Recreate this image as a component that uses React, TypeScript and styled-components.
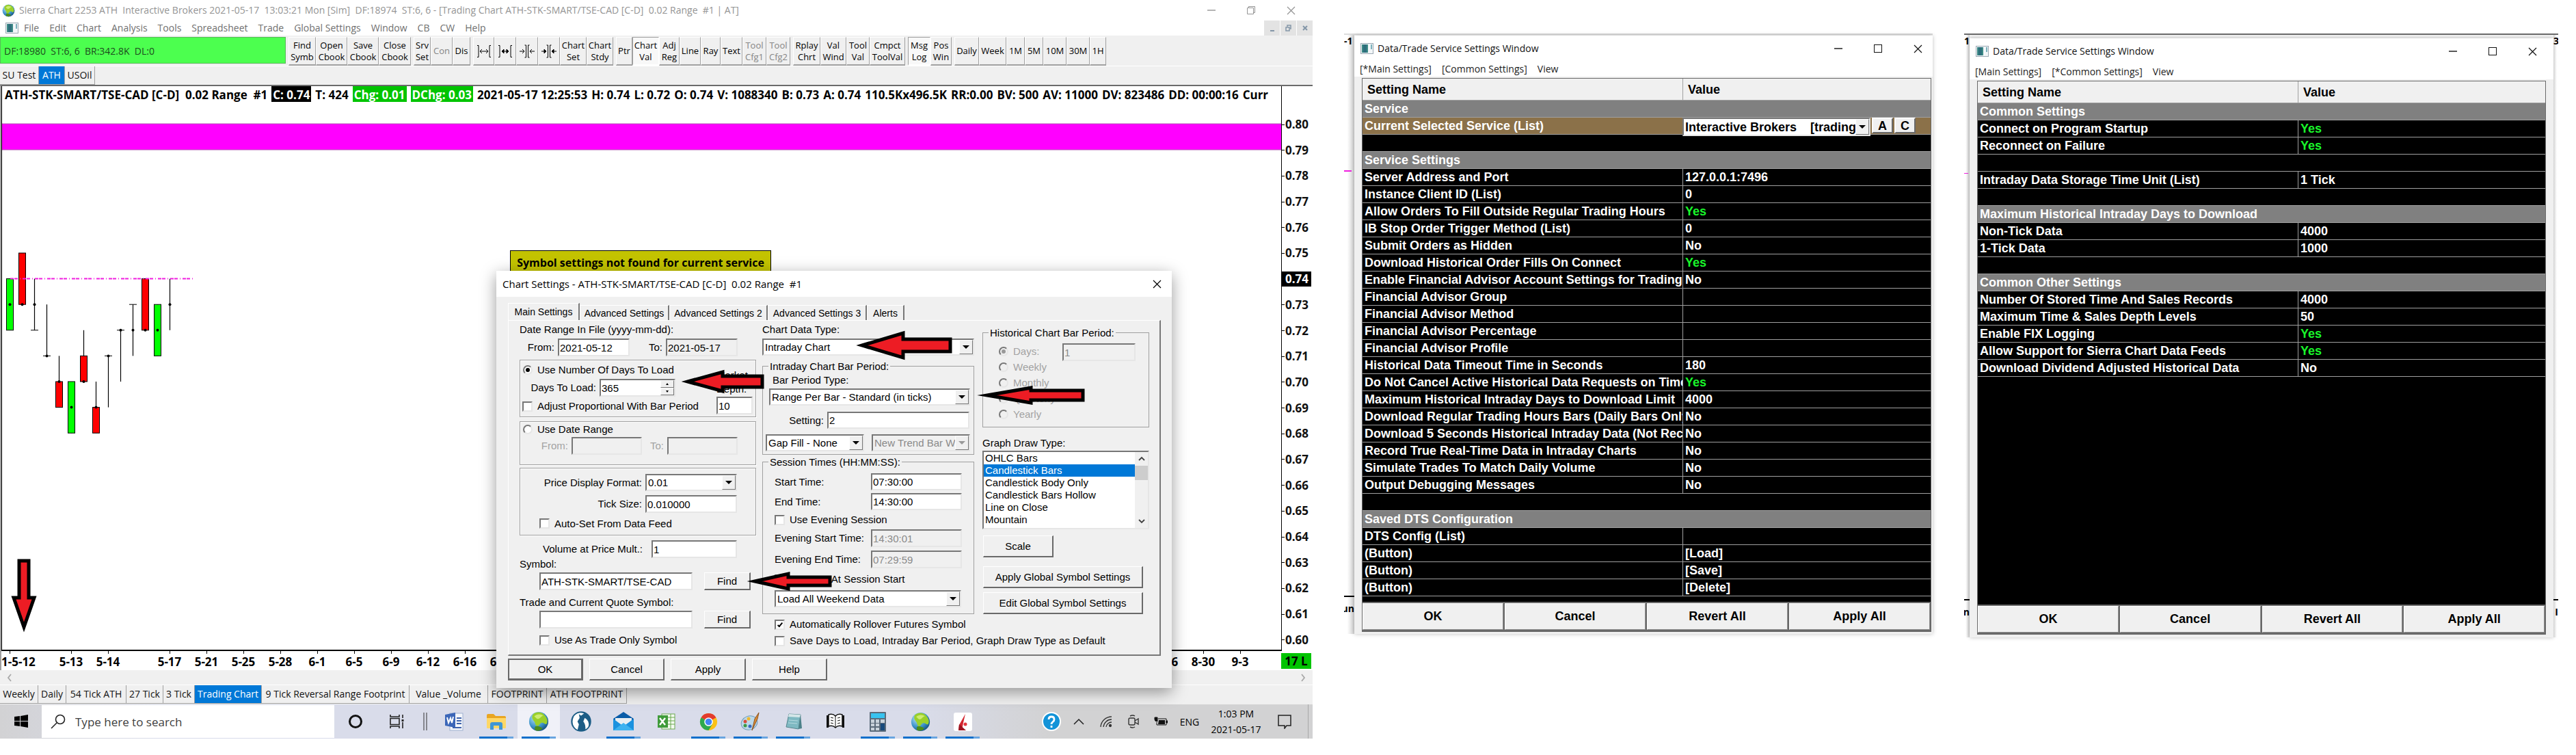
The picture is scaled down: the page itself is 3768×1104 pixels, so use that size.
import React from 'react';
import styled, { createGlobalStyle, css } from 'styled-components';

const UI = `"Open Sans", "Noto Sans", sans-serif`;
const SANS = `"Liberation Sans", Arial, sans-serif`;

const Global = createGlobalStyle`
  *, *::before, *::after { box-sizing: border-box; }
  body { margin: 0; background: #fff; color: #000; font-family: ${UI}; font-size: 14px; }
  button, input, select { font: inherit; color: inherit; margin: 0; border-radius: 0; }
  svg { display: block; flex: none; }
`;

const Page = styled.main`
  display: grid;
  grid-template-columns: 1920fr 861fr 869fr;
  column-gap: 46px;
  padding-right: 26px;
  align-items: start;
`;

/* ---------- application window ---------- */

const AppWindow = styled.section`
  position: relative;
  display: flex;
  flex-direction: column;
  min-width: 0;
  background: #fff;
`;

const TitleBar = styled.header<{ $h: number; $end?: number; $muted?: boolean }>`
  display: flex;
  align-items: center;
  gap: 6px;
  height: ${p => p.$h}px;
  padding: 0 ${p => p.$end ?? 0}px 0 ${p => (p.$muted ? 3 : 9)}px;
  background: #fff;
  color: ${p => (p.$muted ? '#949494' : '#111')};
`;

const TitleText = styled.h1`
  flex: 1;
  margin: 0;
  font-size: 14px;
  font-weight: 400;
  line-height: 20px;
  white-space: pre;
`;

const Controls = styled.div`
  display: flex;
  gap: 14px;
`;

const GlyphButton = styled.button`
  display: grid;
  place-items: center;
  width: 44px;
  height: 24px;
  padding: 0;
  border: 0;
  background: none;
`;

const MenuBar = styled.nav<{ $h: number; $muted?: boolean }>`
  display: flex;
  align-items: center;
  gap: 15px;
  height: ${p => p.$h}px;
  padding-left: 8px;
  background: #fff;
  color: ${p => (p.$muted ? '#6f6f6f' : '#1c1c1c')};
  > svg { margin-right: -7px; }
`;

const MenuItem = styled.a`
  color: inherit;
  font-size: 14px;
  line-height: 20px;
  text-decoration: none;
  white-space: nowrap;
`;

const MdiControls = styled.div`
  display: flex;
  gap: 1px;
  height: 22px;
  margin-left: auto;
`;

const MdiButton = styled.button`
  display: grid;
  place-items: center;
  width: 23px;
  padding: 0;
  border: 0;
  background: #e3e3e3;
  color: #8496a8;
`;

const ToolBar = styled.div`
  display: flex;
  gap: 4px;
  height: 44px;
  padding-top: 2px;
  background: #f0f0f0;
`;

const Status = styled.div`
  width: 418px;
  height: 39px;
  padding-left: 5px;
  border: 1px solid #58b958;
  background: #4cff4f;
  color: #1d4a1d;
  font-size: 14px;
  line-height: 40px;
  white-space: pre;
`;

const ToolGroup = styled.div`
  display: flex;
`;

const Tool = styled.button<{ $w: number; $on?: boolean }>`
  display: grid;
  place-content: center;
  width: ${p => p.$w}px;
  padding: 0;
  border: solid;
  border-width: 1px 1px 2px;
  border-color: ${p => (p.$on ? '#a0a0a0 #fff #fff #a0a0a0' : '#fff #a0a0a0 #a0a0a0 #fff')};
  background: ${p => (p.$on ? '#f8f8f8' : '#f0f0f0')};
  font-size: 13px;
  line-height: 17px;
  text-align: center;
  white-space: pre;
  &:disabled { color: #858585; }
`;

const TabStrip = styled.div<{ $h: number }>`
  display: flex;
  height: ${p => p.$h}px;
  border-top: 1px solid #fff;
  background: #f0f0f0;
`;

const SheetTab = styled.button<{ $w: number; $on?: boolean }>`
  width: ${p => p.$w}px;
  height: 27px;
  padding: 0;
  border: solid;
  border-width: 0 1px 1px 0;
  border-color: #a0a0a0;
  background: ${p => (p.$on ? '#0078d7' : '#f0f0f0')};
  color: ${p => (p.$on ? '#fff' : '#111')};
  font-size: 14px;
  line-height: 24px;
  white-space: nowrap;
`;

const Chart = styled.div`
  display: grid;
  grid-template-columns: minmax(0, 1fr) 46px;
  border-top: 2px solid #6b6b6b;
  border-left: 2px solid #a0a0a0;
  font-weight: 700;
`;

const Plot = styled.div`
  display: flex;
  flex-direction: column;
  min-width: 0;
  border-left: 1px solid #000;
  border-bottom: 2px solid #000;
`;

const Readout = styled.div`
  display: flex;
  gap: 6px;
  height: 24px;
  padding-left: 4px;
  overflow: hidden;
  font-size: 17px;
  line-height: 25px;
  white-space: pre;
`;

const Chip = styled.span<{ $bg: string }>`
  height: 23px;
  padding: 0 2px;
  background: ${p => p.$bg};
  color: #fff;
`;

const PriceAxis = styled.ol`
  display: flex;
  flex-direction: column;
  justify-content: space-between;
  margin: 0;
  padding: 45px 2px 5px 0;
  border-left: 1px solid #000;
  list-style: none;
`;

const Price = styled.li<{ $on?: boolean }>`
  display: flex;
  align-items: center;
  height: 22px;
  background: ${p => (p.$on ? '#000' : 'none')};
  color: ${p => (p.$on ? '#fff' : '#111')};
  font-size: 17px;
  line-height: 22px;
  &::before { content: ''; width: 4px; height: 1px; margin-right: 1px; background: #000; }
`;

const DateAxis = styled.ol`
  display: flex;
  min-width: 0;
  height: 28px;
  margin: 0;
  padding: 0;
  overflow: hidden;
  list-style: none;
  font-size: 17px;
  line-height: 24px;
`;

const DateCell = styled.li<{ $w: number; $first?: boolean }>`
  display: flex;
  flex: none;
  flex-direction: column;
  align-items: ${p => (p.$first ? 'flex-start' : 'center')};
  width: ${p => p.$w}px;
  white-space: nowrap;
  &::before {
    content: '';
    width: 1px;
    height: 4px;
    margin-left: ${p => (p.$first ? '12px' : 0)};
    background: #000;
  }
`;

const DateGap = styled.li<{ $w: number }>`
  flex: none;
  width: ${p => p.$w}px;
`;

const LastMark = styled.div`
  align-self: center;
  height: 23px;
  margin-right: 2px;
  background: #00c400;
  font-size: 17px;
  line-height: 23px;
  text-align: center;
`;

const ScrollTrack = styled.div`
  display: flex;
  align-items: center;
  justify-content: space-between;
  height: 21px;
  padding: 0 8px;
  background: #f0f0f0;
`;

/* ---------- taskbar ---------- */

const TaskBar = styled.footer`
  display: flex;
  height: 50px;
  background: linear-gradient(90deg, #d2d2d4 0, #d9dcea 12%, #d9dcea 70%, #d2d2d3 80%);
`;

const TaskSlot = styled.button<{ $w: number; $live?: boolean; $on?: boolean }>`
  position: relative;
  display: grid;
  place-items: center;
  width: ${p => p.$w}px;
  padding: 0;
  border: 0;
  background: ${p => (p.$on ? '#f0f1f8' : 'none')};
  ${p => p.$live && css`
    &::after {
      content: '';
      position: absolute;
      right: 6px;
      bottom: 0;
      left: 6px;
      height: 3px;
      background: linear-gradient(90deg, #0b6fcb 82%, #69a5e0 82%);
    }
  `}
`;

const Search = styled.label`
  display: flex;
  align-items: center;
  gap: 14px;
  width: 428px;
  margin: 1px 0;
  padding-left: 13px;
  background: #fff;
`;

const SearchInput = styled.input`
  flex: 1;
  min-width: 0;
  padding: 0;
  border: 0;
  outline: 0;
  background: none;
  font-size: 17px;
  &::placeholder { color: #404040; opacity: 1; }
`;

const Tray = styled.div`
  display: flex;
  margin-left: auto;
  padding-right: 6px;
`;

const TrayText = styled.div<{ $w: number }>`
  align-self: center;
  width: ${p => p.$w}px;
  font-size: 14px;
  line-height: 23px;
  text-align: center;
`;

const ShowDesktop = styled.div`
  width: 10px;
  border-right: 1px solid #a8a8a8;
`;

/* ---------- chart settings dialog ---------- */

const Notice = styled.div`
  position: absolute;
  top: 366px;
  left: 746px;
  width: 382px;
  height: 40px;
  border: 1px solid #000;
  background: #c3c300;
  font-size: 16px;
  font-weight: 700;
  line-height: 34px;
  text-align: center;
  white-space: nowrap;
`;

const Dialog = styled.form`
  position: absolute;
  top: 396px;
  left: 726px;
  display: flex;
  flex-direction: column;
  width: 988px;
  padding-bottom: 11px;
  background: #f0f0f0;
  box-shadow: 0 6px 22px rgba(0, 0, 0, 0.4);
  font-family: ${SANS};
  font-size: 15px;
  line-height: 18px;
`;

const DialogTitle = styled.div`
  display: flex;
  align-items: center;
  justify-content: space-between;
  height: 38px;
  padding-left: 9px;
  background: #fff;
  font-family: ${UI};
  font-size: 15px;
  white-space: pre;
`;

const DialogTabs = styled.div`
  display: flex;
  align-items: flex-end;
  height: 34px;
  padding-left: 17px;
`;

const DialogTab = styled.button<{ $w: number; $on?: boolean }>`
  width: ${p => p.$w}px;
  height: ${p => (p.$on ? 25 : 22)}px;
  padding: 0;
  border: solid;
  border-width: 1px 2px 0 1px;
  border-color: #fff #777 #fff #fff;
  background: #f0f0f0;
  font-size: 14px;
  white-space: nowrap;
`;

const Panel = styled.div`
  display: grid;
  grid-template-columns: 346px 310px 247px;
  margin: 0 16px 0 17px;
  height: 491px;
  padding-left: 16px;
  column-gap: 9px;
  border: solid;
  border-width: 1px 2px 2px 1px;
  border-color: #fff #777 #777 #fff;
`;

const Column = styled.div<{ $pl?: number }>`
  display: flex;
  flex-direction: column;
  min-width: 0;
  padding-left: ${p => p.$pl ?? 0}px;
`;

const Line = styled.div<{ $h: number; $cols?: string; $pl?: number; $mt?: number; $gap?: number }>`
  display: grid;
  grid-template-columns: ${p => p.$cols ?? 'auto'};
  column-gap: ${p => p.$gap ?? 0}px;
  align-items: center;
  flex: none;
  height: ${p => p.$h}px;
  margin-top: ${p => p.$mt ?? 0}px;
  padding-left: ${p => p.$pl ?? 0}px;
  white-space: nowrap;
`;

const Caption = styled.label<{ $end?: boolean; $dim?: boolean }>`
  padding-right: ${p => (p.$end ? 5 : 0)}px;
  color: ${p => (p.$dim ? '#a3a3a3' : 'inherit')};
  text-align: ${p => (p.$end ? 'right' : 'left')};
  white-space: nowrap;
`;

const sunken = css`
  border: 2px solid;
  border-color: #777 #e6e6e6 #e6e6e6 #777;
`;

const Field = styled.input`
  width: 100%;
  min-width: 0;
  height: 100%;
  padding: 0 1px;
  ${sunken}
  outline: 0;
  background: #fff;
  font-size: 15px;
  &:read-only, &:disabled { background: #f0f0f0; }
  &:disabled { color: #8a8a8a; }
`;

const Group = styled.div<{ $mt: number; $h: number; $cols?: string }>`
  display: grid;
  grid-template-columns: ${p => p.$cols ?? 'minmax(0, 1fr)'};
  align-content: start;
  flex: none;
  height: ${p => p.$h}px;
  margin-top: ${p => p.$mt}px;
  border: 1px solid #a0a0a0;
  box-shadow: 1px 1px 0 #fff, inset 1px 1px 0 #fff;
`;

const FieldSet = styled.fieldset<{ $mt: number; $h: number }>`
  flex: none;
  min-width: 0;
  height: ${p => p.$h}px;
  margin: ${p => p.$mt}px 0 0;
  padding: 0;
  border: 1px solid #a0a0a0;
`;

const Legend = styled.legend`
  height: 18px;
  margin-left: 8px;
  padding: 0 2px;
  line-height: 19px;
`;

const Tick = styled.label<{ $dim?: boolean }>`
  display: flex;
  align-items: center;
  gap: 7px;
  color: ${p => (p.$dim ? '#a3a3a3' : 'inherit')};
  white-space: nowrap;
`;

const CheckInput = styled.input`
  appearance: none;
  display: grid;
  place-content: center;
  width: 15px;
  height: 15px;
  ${sunken}
  background: #fff;
  &:checked::after {
    content: '';
    width: 4px;
    height: 8px;
    border: solid #000;
    border-width: 0 2px 2px 0;
    transform: rotate(40deg);
  }
`;

const RadioInput = styled.input`
  appearance: none;
  display: grid;
  place-content: center;
  width: 14px;
  height: 14px;
  ${sunken}
  border-radius: 50%;
  background: #fff;
  &:disabled { background: #f0f0f0; }
  &:checked::after { content: ''; width: 6px; height: 6px; border-radius: 50%; background: #000; }
  &:checked:disabled::after { background: #999; }
`;

const PickBox = styled.span`
  position: relative;
  display: block;
  height: 100%;
  min-width: 0;
`;

const Pick = styled.select<{ $bold?: boolean }>`
  appearance: none;
  width: 100%;
  height: 100%;
  padding: 0 20px 0 2px;
  ${sunken}
  outline: 0;
  background: #fff;
  font-size: ${p => (p.$bold ? 18 : 15)}px;
  font-weight: ${p => (p.$bold ? 700 : 400)};
  &:disabled { background: #f0f0f0; color: #8a8a8a; opacity: 1; }
`;

const PickArrow = styled.span<{ $dim?: boolean }>`
  position: absolute;
  top: 2px;
  right: 2px;
  bottom: 2px;
  display: grid;
  place-items: center;
  width: 20px;
  border: 1px solid;
  border-color: #fff #777 #777 #fff;
  background: #f0f0f0;
  pointer-events: none;
  &::after {
    content: '';
    border: solid transparent;
    border-width: 5px 5px 0;
    border-top-color: ${p => (p.$dim ? '#999' : '#000')};
  }
`;

const SpinBox = styled.div`
  display: grid;
  grid-template-columns: minmax(0, 1fr) 20px;
  height: 100%;
  ${sunken}
  background: #fff;
  input { border: 0; }
`;

const SpinButtons = styled.div`
  display: grid;
  grid-template-rows: 1fr 1fr;
`;

const SpinButton = styled.button`
  display: grid;
  place-items: center;
  padding: 0;
  border: 1px solid;
  border-color: #fff #777 #777 #fff;
  background: #f0f0f0;
`;

const Push = styled.button<{ $w?: number; $h?: number; $mt?: number; $main?: boolean }>`
  flex: none;
  width: ${p => (p.$w ? `${p.$w}px` : '100%')};
  height: ${p => (p.$h ? `${p.$h}px` : '100%')};
  margin: ${p => p.$mt ?? 0}px 0 0 1px;
  padding: 0;
  border: solid;
  border-width: ${p => (p.$main ? '2px 3px 3px 2px' : '1px 2px 2px 1px')};
  border-color: ${p => (p.$main ? '#696969' : '#fff #696969 #696969 #fff')};
  background: #f0f0f0;
  font-size: 15px;
  white-space: nowrap;
`;

const DepthCell = styled.div`
  padding: 12px 4px 0 0;
  line-height: 20px;
`;

const DepthField = styled.div`
  height: 26px;
  margin-top: 1px;
`;

const PeriodGrid = styled.div`
  display: grid;
  grid-template-columns: 93px 107px;
  padding: 7px 0 0 23px;
`;

const PeriodField = styled.div`
  height: 26px;
`;

const ListBox = styled.div`
  display: grid;
  grid-template-columns: minmax(0, 1fr) 19px;
  flex: none;
  height: 115px;
  ${sunken}
  background: #fff;
`;

const ListItems = styled.ul`
  margin: 0;
  padding: 0;
  overflow: hidden;
  list-style: none;
`;

const ListItem = styled.li<{ $on?: boolean }>`
  height: 18px;
  padding-left: 2px;
  background: ${p => (p.$on ? '#0078d7' : 'none')};
  color: ${p => (p.$on ? '#fff' : 'inherit')};
  white-space: nowrap;
`;

const ListScroll = styled.div`
  display: grid;
  grid-template-rows: 20px 21px 1fr 20px;
  justify-items: center;
  align-items: center;
  background: #f0f0f0;
`;

const ListThumb = styled.span`
  width: 100%;
  height: 100%;
  background: #cdcdcd;
`;

const DialogButtons = styled.div`
  display: flex;
  gap: 8px;
  height: 32px;
  margin-top: 4px;
  padding-left: 16px;
`;

const Annotations = styled.svg`
  position: absolute;
  inset: 0;
  width: 100%;
  height: 100%;
  pointer-events: none;
`;

/* ---------- service settings windows ---------- */

const Frame = styled.section<{ $cols: string; $edge: string }>`
  display: grid;
  grid-template-columns: ${p => p.$cols};
  min-width: 0;
  margin-top: 49px;
  border-top: 2px solid ${p => p.$edge};
  background: #f3f3f3;
`;

const Sliver = styled.div<{ $side: 'left' | 'right' }>`
  display: flex;
  flex-direction: column;
  min-width: 0;
  overflow: hidden;
  background: linear-gradient(${p => (p.$side === 'left' ? '90deg' : '270deg')}, #fff 30%, #d2d2d2);
  color: #000;
  font-size: 14px;
  font-weight: 700;
  line-height: 18px;
`;

const SliverMark = styled.span<{ $mt: number; $color: string; $h: number }>`
  width: 70%;
  height: ${p => p.$h}px;
  margin-top: ${p => p.$mt}px;
  background: ${p => p.$color};
`;

const SliverFoot = styled.div`
  margin-top: auto;
  height: 56px;
  padding-top: 8px;
  border-top: 2px solid #000;
  direction: rtl;
`;

const ServiceWindow = styled.div<{ $mt: number }>`
  display: flex;
  flex-direction: column;
  min-width: 0;
  margin-top: ${p => p.$mt}px;
  background: #f0f0f0;
  box-shadow: 0 0 6px rgba(0, 0, 0, 0.25);
`;

const ServiceBody = styled.div<{ $pad: string; $rest: number }>`
  padding: ${p => p.$pad};
  font-family: ${SANS};
  > div:first-child { padding-bottom: ${p => p.$rest}px; }
`;

const TableWrap = styled.div`
  border: 1px solid #696969;
  border-bottom: 0;
  background: #000;
`;

const SettingsTable = styled.table`
  width: 100%;
  border-collapse: separate;
  border-spacing: 0;
  table-layout: fixed;
  color: #fff;
  font-size: 18px;
  font-weight: 700;
  line-height: 20px;
`;

const HeadCell = styled.th`
  height: 32px;
  padding: 0 7px;
  border-bottom: 1px solid #a0a0a0;
  background: #f0f0f0;
  color: #000;
  text-align: left;
  &:first-child { width: 469px; border-right: 1px solid #a0a0a0; }
`;

const Cell = styled.td<{ $kind?: 'section' | 'active'; $split?: boolean; $yes?: boolean }>`
  height: 25px;
  padding: 0 0 0 3px;
  border-bottom: 1px solid #a0a0a0;
  border-right: ${p => (p.$split ? '1px solid #a0a0a0' : 0)};
  background: ${p => (p.$kind === 'section' ? '#808080' : p.$kind === 'active' ? '#8b7149' : '#000')};
  color: ${p => (p.$yes ? '#19f52a' : '#fff')};
  overflow: ${p => (p.$kind === 'active' && !p.$split ? 'visible' : 'hidden')};
  white-space: nowrap;
`;

const Picker = styled.div`
  display: flex;
  align-items: flex-start;
  gap: 2px;
  height: 24px;
  margin-left: -4px;
  color: #000;
`;

const PickerSelect = styled.div`
  width: 275px;
  height: 27px;
`;

const PickerButton = styled.button`
  width: 31px;
  height: 23px;
  padding: 0;
  border: 2px solid;
  border-color: #fff #696969 #696969 #fff;
  background: #f0f0f0;
  font-size: 18px;
  font-weight: 700;
  line-height: 18px;
`;

const ActionRow = styled.div`
  display: grid;
  grid-template-columns: repeat(4, 1fr);
  gap: 2px;
  padding: 2px 2px 3px 1px;
  background: #696969;
`;

const ActionButton = styled.button`
  height: 39px;
  padding: 0;
  border: 1px solid;
  border-color: #fff #8c8c8c #8c8c8c #fff;
  background: #f0f0f0;
  font-size: 18px;
  font-weight: 700;
`;

/* ---------- icons ---------- */

const Globe = ({ size = 24 }: { size?: number }) => (
  <svg width={size} height={size} viewBox="0 0 32 32" aria-hidden="true">
    <defs>
      <radialGradient id={`sea${size}`} cx="0.35" cy="0.3" r="0.8">
        <stop offset="0" stopColor="#bfe6f7" />
        <stop offset="0.6" stopColor="#3c93c9" />
        <stop offset="1" stopColor="#0e4673" />
      </radialGradient>
    </defs>
    <circle cx="16" cy="16" r="15" fill={`url(#sea${size})`} />
    <path d="M7 5c5-5 14-4 18 1 4 4 6 10 3 14-3 1-4-3-8-2-3 1-3 5-6 5-4 0-3-5-5-7-2-3-5-6-2-11z" fill="#9bd02a" />
    <path d="M10 24c4-2 9 0 12 3-4 4-9 4-12 2z" fill="#4c8e1a" />
    <path d="M9 8c4-4 10-4 14-1-4 1-5 5-8 5s-4-3-6-4z" fill="#cdec72" />
  </svg>
);

const AppGlyph = () => (
  <svg width="19" height="16" viewBox="0 0 19 16" aria-hidden="true">
    <rect x="0.5" y="0.5" width="18" height="15" fill="#f2f6f8" stroke="#9aa8b2" />
    <rect x="2" y="2" width="9" height="12" fill="#3d8a86" />
    <rect x="4" y="2" width="5" height="12" fill="#2e6f7c" />
    <rect x="15" y="2" width="2" height="7" fill="#7ab0bb" />
  </svg>
);

const MinimizeGlyph = () => (
  <svg width="12" height="12" aria-hidden="true"><path d="M0 6h12" stroke="currentColor" strokeWidth="1.4" /></svg>
);
const MaximizeGlyph = () => (
  <svg width="12" height="12" aria-hidden="true"><rect x="0.5" y="0.5" width="11" height="11" fill="none" stroke="currentColor" /></svg>
);
const RestoreGlyph = () => (
  <svg width="12" height="12" aria-hidden="true"><path d="M0.5 2.5h9v9h-9zM2.5 2V0.5h9v9H10" fill="none" stroke="currentColor" /></svg>
);
const CloseGlyph = () => (
  <svg width="13" height="13" aria-hidden="true"><path d="M1 1l11 11M12 1L1 12" stroke="currentColor" strokeWidth="1.2" /></svg>
);
const Chevron = ({ d, color = '#404040' }: { d: string; color?: string }) => (
  <svg width="12" height="12" aria-hidden="true"><path d={d} fill="none" stroke={color} strokeWidth="1.8" /></svg>
);

const SpacingGlyph = ({ inward, solid }: { inward?: boolean; solid?: boolean }) => (
  <svg width="22" height="20" viewBox="0 0 22 20" aria-hidden="true" stroke="#000">
    {inward ? (
      <>
        <path d="M9.5 1v18M12.5 1v18M7.500 1h2M7.500 19h2M12.500 1h2M12.500 19h2M0 10h7M15 10h7" fill="none" />
        <path d={solid ? 'M4 7l3 3-3 3zM18 7l-3 3 3 3z' : 'M4 7l3 3-3 3M18 7l-3 3 3 3'} fill={solid ? '#000' : 'none'} />
      </>
    ) : (
      <>
        <path d="M1 1.500h2v17H1M21 1.500h-2v17h2M6 10h10" fill="none" />
        <path d={solid ? 'M9 7l-3 3 3 3zM13 7l3 3-3 3z' : 'M8 7l-3 3 3 3M14 7l3 3-3 3'} fill={solid ? '#000' : 'none'} />
      </>
    )}
  </svg>
);

const taskIcons: Record<string, React.ReactNode> = {
  start: <svg width="22" height="22" viewBox="0 0 22 22"><path d="M1 4l8-1v7H1zM10 3l11-2v9H10zM1 11h8v7l-8-1zM10 11h11v9l-11-2z" fill="#000" /></svg>,
  cortana: <svg width="22" height="22" viewBox="0 0 22 22"><circle cx="11" cy="11" r="8.500" fill="none" stroke="#111" strokeWidth="3" /></svg>,
  view: <svg width="22" height="22" viewBox="0 0 22 22" fill="none" stroke="#222" strokeWidth="1.600"><path d="M1 1v3h13V1M1 21v-3h13v3M1 6.500h13v9H1zM19 1v5M19 12v9" /><path d="M19 8v3" strokeWidth="3" /></svg>,
  bars: <svg width="6" height="26"><path d="M1 0v26M5 0v26" stroke="#333" /></svg>,
  word: <svg width="28" height="28" viewBox="0 0 28 28"><rect x="8" y="2" width="19" height="25" fill="#f4f6fb" stroke="#9fb0cf" /><path d="M18 9h7M18 13h7M18 17h7M12 23h13" stroke="#3d62ab" strokeWidth="2" /><path d="M1 4l15-3v22L1 20z" fill="#3b66b8" /><path d="M4 8l2 8 3-7 2 7 2-9" fill="none" stroke="#fff" strokeWidth="2" /></svg>,
  folder: <svg width="28" height="24" viewBox="0 0 28 24"><path d="M0 3q0-2 2-2h8l3 3h13q2 0 2 2v15H0z" fill="#e9a521" /><path d="M0 7h28v14q0 1-1 1H1q-1 0-1-1z" fill="#ffd766" /><path d="M5 24v-8q0-3 3-3h12q3 0 3 3v8h-5v-6h-8v6z" fill="#3f96d6" /></svg>,
  globe: <Globe size={30} />,
  fox: <svg width="30" height="30" viewBox="0 0 28 28"><circle cx="14" cy="14" r="13" fill="#1c5d86" /><path d="M4 7Q9 0 18 3l-4 3-3-2 1 5-3 5 2 4-2 8Q-1 19 4 7z" fill="#fff" /><path d="M19 9q7 4 5 12-1 3-4 4 0-8-3-11z" fill="#fff" /><circle cx="14" cy="14" r="13" fill="none" stroke="#1c5d86" strokeWidth="1.500" /></svg>,
  mail: <svg width="30" height="28" viewBox="0 0 30 28"><path d="M0 10L15 0l15 10v2H0z" fill="#0a5ca8" /><path d="M3 9h24v12H3z" fill="#e9eef2" /><path d="M0 10l15 11 15-11v17H0z" fill="#1b92df" /><path d="M0 27l15-11 15 11z" fill="#3db2f0" /></svg>,
  excel: <svg width="27" height="26" viewBox="0 0 27 26"><rect x="7" y="2" width="19" height="22" fill="#f3faf0" stroke="#6aa84f" /><path d="M13 7h13M13 12h13M13 17h13M20 2v22" stroke="#6aa84f" /><rect x="1" y="4" width="15" height="18" fill="#3f9b3a" /><path d="M4 8l8 10M12 8L4 18" stroke="#fff" strokeWidth="2.500" /></svg>,
  chrome: <svg width="27" height="27" viewBox="0 0 28 28"><circle cx="14" cy="14" r="13" fill="#fbc116" /><path d="M14 14L2.700 7.500A13 13 0 0 1 25.300 7.500z" fill="#e33b2e" /><path d="M14 14L2.700 7.500A13 13 0 0 0 14 27l6-10z" fill="#2da94f" /><circle cx="14" cy="14" r="6.500" fill="#fff" /><circle cx="14" cy="14" r="5" fill="#4285f4" /></svg>,
  paint: <svg width="30" height="28" viewBox="0 0 30 28"><ellipse cx="13" cy="16" rx="12" ry="10" fill="#bcd9ea" stroke="#6f9cba" transform="rotate(-20 13 16)" /><circle cx="7" cy="14" r="2.500" fill="#d94b3a" /><circle cx="12" cy="10" r="2.500" fill="#f0b92e" /><circle cx="7" cy="20" r="2.500" fill="#3d9a47" /><circle cx="14" cy="21" r="2.500" fill="#3c6bc0" /><path d="M27 1l-2 9-8 17 4-17z" fill="#d98a35" stroke="#8d5420" /></svg>,
  notepad: <svg width="28" height="28" viewBox="0 0 28 28"><path d="M8 3l17 1-3 21-18-3z" fill="#7fb9c2" stroke="#55858d" /><path d="M8 3l17 1-1 4-17-1z" fill="#d5e6e8" /><path d="M25 4l2 20-5 1z" fill="#4c8189" /><path d="M8 12l13 1M7 16l13 1" stroke="#b7dbe0" /></svg>,
  book: <svg width="28" height="24" viewBox="0 0 28 24"><path d="M1 3h3v18H1zM24 3h3v18h-3z" fill="#111" /><path d="M4 2q6-2 10 2 4-4 10-2v17q-6-2-10 2-4-4-10-2z" fill="#fff" stroke="#111" strokeWidth="1.500" /><path d="M14 4v17M7 6l4 1M7 10l4 1M7 14l4 1M21 6l-4 1M21 10l-4 1M21 14l-4 1" stroke="#111" /></svg>,
  calc: <svg width="24" height="29" viewBox="0 0 24 29"><rect width="24" height="29" rx="1" fill="#5b6b7a" /><rect x="2" y="2" width="20" height="7" fill="#37c3f0" /><path d="M2 11h5v5H2zM9 11h5v5H9zM16 11h6v5h-6zM2 17h5v4H2zM9 17h5v4H9zM2 23h5v4H2zM9 23h5v4H9z" fill="#c8d2da" /><path d="M16 17h6v10h-6z" fill="#174a7c" /></svg>,
  globe2: <Globe size={29} />,
  broker: <svg width="27" height="27" viewBox="0 0 27 27"><rect width="27" height="27" rx="3" fill="#fff" /><path d="M17 2l-3 13-2 10-5 1 1-8z" fill="#d22630" /><path d="M8 17l10 9H7z" fill="#9c1320" /><circle cx="17" cy="17" r="2.500" fill="#e2373f" /></svg>,
  help: <svg width="28" height="28" viewBox="0 0 28 28"><circle cx="14" cy="14" r="13" fill="#1393d8" stroke="#fff" strokeWidth="2" /><path d="M10 11q0-4 4-4t4 4q0 2-2 3.500t-2 3.500M14 20v3" fill="none" stroke="#fff" strokeWidth="2.800" /></svg>,
  up: <svg width="16" height="10"><path d="M1 9l7-7 7 7" fill="none" stroke="#222" strokeWidth="1.500" /></svg>,
  wifi: <svg width="18" height="18" viewBox="0 0 18 18" fill="none" stroke="#333" strokeWidth="1.300"><path d="M1 17A16 16 0 0 1 17 2M5 17A12 12 0 0 1 17 6M9 17a8 8 0 0 1 8-7" /><circle cx="15" cy="15" r="1.500" fill="#333" /></svg>,
  cam: <svg width="18" height="20" viewBox="0 0 18 20" fill="none" stroke="#333" strokeWidth="1.400"><rect x="2" y="5" width="9" height="10" rx="2" /><path d="M11 9l5-3v8l-5-3M4 2q4-2 7 0M4 18q4 2 7 0" /></svg>,
  battery: <svg width="20" height="14" viewBox="0 0 20 14"><path d="M6 3h12v9H4V8" fill="none" stroke="#111" /><path d="M7 5h9v6H6z" fill="#111" /><path d="M18 6h2v3h-2zM1 1v3q0 3 4 3V1M2 0v2M4 0v2" fill="#111" stroke="#111" /></svg>,
  note: <svg width="20" height="21" viewBox="0 0 20 21"><path d="M1 1h18v15h-6l-3 4v-4H1z" fill="none" stroke="#222" strokeWidth="1.500" /></svg>,
};

/* ---------- data ---------- */

type ToolDef = { t: React.ReactNode; w: number; off?: boolean; on?: boolean; name?: string };
const toolGroups: ToolDef[][] = [
  [{ t: 'Find\nSymb', w: 40 }, { t: 'Open\nCbook', w: 46 }, { t: 'Save\nCbook', w: 46 }, { t: 'Close\nCbook', w: 47 }],
  [{ t: 'Srv\nSet', w: 25 }, { t: 'Con', w: 32, off: true }, { t: 'Dis', w: 26 }],
  [
    { t: <SpacingGlyph />, w: 31, name: 'Increase spacing' },
    { t: <SpacingGlyph solid />, w: 32, name: 'Increase spacing more' },
    { t: <SpacingGlyph inward />, w: 32, name: 'Decrease spacing' },
    { t: <SpacingGlyph inward solid />, w: 32, name: 'Decrease spacing more' },
    { t: 'Chart\nSet', w: 39 },
    { t: 'Chart\nStdy', w: 39 },
  ],
  [
    { t: 'Ptr', w: 24 }, { t: 'Chart\nVal', w: 39, on: true }, { t: 'Adj\nReg', w: 30 }, { t: 'Line', w: 31 },
    { t: 'Ray', w: 29 }, { t: 'Text', w: 32 }, { t: 'Tool\nCfg1', w: 35, off: true }, { t: 'Tool\nCfg2', w: 35, off: true },
  ],
  [{ t: 'Rplay\nChrt', w: 40 }, { t: 'Val\nWind', w: 38 }, { t: 'Tool\nVal', w: 34 }, { t: 'Cmpct\nToolVal', w: 52 }],
  [{ t: 'Msg\nLog', w: 33, on: true }, { t: 'Pos\nWin', w: 31 }],
  [
    { t: 'Daily', w: 36 }, { t: 'Week', w: 40 }, { t: '1M', w: 27 }, { t: '5M', w: 27 },
    { t: '10M', w: 34 }, { t: '30M', w: 34 }, { t: '1H', w: 24 },
  ],
];

const menuItems = ['File', 'Edit', 'Chart', 'Analysis', 'Tools', 'Spreadsheet', 'Trade', 'Global Settings', 'Window', 'CB', 'CW', 'Help'];

const sheetTabs: [string, number][] = [
  ['Weekly', 56], ['Daily', 41], ['54 Tick ATH', 88], ['27 Tick', 54], ['3 Tick', 46], ['Trading Chart', 98],
  ['9 Tick Reversal Range Footprint', 216], ['Value _Volume', 115], ['FOOTPRINT', 86], ['ATH FOOTPRINT', 117],
];

const prices = Array.from({ length: 21 }, (_, i) => (0.8 - i * 0.01).toFixed(2));
const dates = ['5-17', '5-21', '5-25', '5-28', '6-1', '6-5', '6-9', '6-12', '6-16', '6-19'];

const priceY = (cents: number) => 182 + (80 - cents) * 37.6 - 150;

type Candle = { hi: number; lo: number; dot: number; body?: [number, number, string]; bar?: number };
const GREEN = '#00ff00';
const RED = '#ff0000';
const candles: Candle[] = [
  { hi: 74, lo: 72, dot: 73, body: [74, 72, GREEN] },
  { hi: 75, lo: 73, dot: 73, body: [75, 73, RED] },
  { hi: 74, lo: 72, dot: 73, bar: 72 },
  { hi: 73, lo: 71, dot: 71, bar: 71 },
  { hi: 71, lo: 69, dot: 70, body: [70, 69, RED] },
  { hi: 70, lo: 68, dot: 69, body: [70, 68, GREEN] },
  { hi: 72, lo: 70, dot: 70, body: [71, 70, RED] },
  { hi: 70, lo: 68, dot: 69, body: [69, 68, RED] },
  { hi: 71, lo: 69, dot: 71, bar: 71 },
  { hi: 72, lo: 70, dot: 72, bar: 72 },
  { hi: 73, lo: 71, dot: 72, bar: 73 },
  { hi: 74, lo: 72, dot: 72, body: [74, 72, RED] },
  { hi: 73, lo: 71, dot: 72, body: [73, 71, GREEN] },
  { hi: 74, lo: 72, dot: 73 },
];

const taskButtons: { icon: string; w: number; live?: boolean; on?: boolean }[] = [
  { icon: 'cortana', w: 62 }, { icon: 'view', w: 60 }, { icon: 'bars', w: 22 }, { icon: 'word', w: 62 },
  { icon: 'folder', w: 62, live: true }, { icon: 'globe', w: 62, live: true, on: true }, { icon: 'fox', w: 62 },
  { icon: 'mail', w: 62, live: true }, { icon: 'excel', w: 62 }, { icon: 'chrome', w: 62, live: true },
  { icon: 'paint', w: 62, live: true }, { icon: 'notepad', w: 62, live: true }, { icon: 'book', w: 62 },
  { icon: 'calc', w: 62, live: true }, { icon: 'globe2', w: 62, live: true }, { icon: 'broker', w: 62, live: true },
];

type Row = { kind?: 'section' | 'blank' | 'active'; name?: string; value?: string };
const mainRows: Row[] = [
  { kind: 'section', name: 'Service' },
  { kind: 'active', name: 'Current Selected Service (List)' },
  { kind: 'blank' },
  { kind: 'section', name: 'Service Settings' },
  { name: 'Server Address and Port', value: '127.0.0.1:7496' },
  { name: 'Instance Client ID (List)', value: '0' },
  { name: 'Allow Orders To Fill Outside Regular Trading Hours', value: 'Yes' },
  { name: 'IB Stop Order Trigger Method (List)', value: '0' },
  { name: 'Submit Orders as Hidden', value: 'No' },
  { name: 'Download Historical Order Fills On Connect', value: 'Yes' },
  { name: 'Enable Financial Advisor Account Settings for Trading', value: 'No' },
  { name: 'Financial Advisor Group', value: '' },
  { name: 'Financial Advisor Method', value: '' },
  { name: 'Financial Advisor Percentage', value: '' },
  { name: 'Financial Advisor Profile', value: '' },
  { name: 'Historical Data Timeout Time in Seconds', value: '180' },
  { name: 'Do Not Cancel Active Historical Data Requests on Timeout', value: 'Yes' },
  { name: 'Maximum Historical Intraday Days to Download Limit', value: '4000' },
  { name: 'Download Regular Trading Hours Bars (Daily Bars Only)', value: 'No' },
  { name: 'Download 5 Seconds Historical Intraday Data (Not Recommended)', value: 'No' },
  { name: 'Record True Real-Time Data in Intraday Charts', value: 'No' },
  { name: 'Simulate Trades To Match Daily Volume', value: 'No' },
  { name: 'Output Debugging Messages', value: 'No' },
  { kind: 'blank' },
  { kind: 'section', name: 'Saved DTS Configuration' },
  { name: 'DTS Config (List)', value: '' },
  { name: '(Button)', value: '[Load]' },
  { name: '(Button)', value: '[Save]' },
  { name: '(Button)', value: '[Delete]' },
];

const commonRows: Row[] = [
  { kind: 'section', name: 'Common Settings' },
  { name: 'Connect on Program Startup', value: 'Yes' },
  { name: 'Reconnect on Failure', value: 'Yes' },
  { kind: 'blank' },
  { name: 'Intraday Data Storage Time Unit (List)', value: '1 Tick' },
  { kind: 'blank' },
  { kind: 'section', name: 'Maximum Historical Intraday Days to Download' },
  { name: 'Non-Tick Data', value: '4000' },
  { name: '1-Tick Data', value: '1000' },
  { kind: 'blank' },
  { kind: 'section', name: 'Common Other Settings' },
  { name: 'Number Of Stored Time And Sales Records', value: '4000' },
  { name: 'Maximum Time & Sales Depth Levels', value: '50' },
  { name: 'Enable FIX Logging', value: 'Yes' },
  { name: 'Allow Support for Sierra Chart Data Feeds', value: 'Yes' },
  { name: 'Download Dividend Adjusted Historical Data', value: 'No' },
];

/* ---------- parts ---------- */

const Dropdown = ({ id, value, label, off, bold }: { id?: string; value: string; label?: string; off?: boolean; bold?: boolean }) => (
  <PickBox>
    <Pick id={id} aria-label={label} disabled={off} $bold={bold} defaultValue={value}>
      <option>{value}</option>
    </Pick>
    <PickArrow $dim={off} />
  </PickBox>
);

const Check = ({ label, on }: { label: string; on?: boolean }) => (
  <Tick><CheckInput type="checkbox" defaultChecked={on} />{label}</Tick>
);

const Radio = ({ label, name, on, off }: { label: string; name: string; on?: boolean; off?: boolean }) => (
  <Tick $dim={off}><RadioInput type="radio" name={name} defaultChecked={on} disabled={off} />{label}</Tick>
);

const Plotting = () => (
  <svg width="100%" height="800" aria-label="ATH price chart">
    <rect x="0" y="31" width="100%" height="38" fill="#ff00ff" />
    <path d="M0 31h1900M0 69h1900" stroke="#b455b4" />
    {candles.map((c, i) => {
      const x = 11.5 + i * 18;
      return (
        <g key={i}>
          <path d={`M${x} ${priceY(c.hi)}V${priceY(c.lo)}`} stroke="#000" strokeWidth="1.200" />
          {c.body && (
            <rect x={x - 5} y={priceY(c.body[0])} width="10" height={priceY(c.body[1]) - priceY(c.body[0])} fill={c.body[2]} stroke="#000" />
          )}
          {c.bar && <path d={`M${x - 5.5} ${priceY(c.bar)}h11`} stroke="#000" />}
          <circle cx={x} cy={priceY(c.dot)} r="2" fill="#000" />
        </g>
      );
    })}
    <path d={`M12 ${priceY(74)}H282`} stroke="#f01fe0" strokeWidth="2" strokeDasharray="5 1 5 3 1 3" />
  </svg>
);

const ARROW = { fill: '#ed1c24', stroke: '#000', strokeWidth: 5, strokeLinejoin: 'miter' as const, strokeMiterlimit: 12 };
const leftArrow = (tip: number, y: number, neck: number, end: number, head: number, shaft: number) =>
  `M${tip} ${y}L${neck} ${y - head}V${y - shaft}H${end}V${y + shaft}H${neck}V${y + head}Z`;

const SettingsDialog = () => (
  <Dialog aria-label="Chart Settings" onSubmit={e => e.preventDefault()}>
    <DialogTitle>
      <span>{'Chart Settings - ATH-STK-SMART/TSE-CAD [C-D]  0.02 Range  #1'}</span>
      <GlyphButton type="button" aria-label="Close dialog"><CloseGlyph /></GlyphButton>
    </DialogTitle>
    <DialogTabs>
      <DialogTab type="button" $w={105} $on>Main Settings</DialogTab>
      <DialogTab type="button" $w={131}>Advanced Settings</DialogTab>
      <DialogTab type="button" $w={144}>Advanced Settings 2</DialogTab>
      <DialogTab type="button" $w={145}>Advanced Settings 3</DialogTab>
      <DialogTab type="button" $w={55}>Alerts</DialogTab>
    </DialogTabs>
    <Panel>
      <Column>
        <Line $h={26}><span>Date Range In File (yyyy-mm-dd):</span></Line>
        <Line $h={26} $cols="56px 105px 53px 105px">
          <Caption htmlFor="fileFrom" $end>From:</Caption><Field id="fileFrom" defaultValue="2021-05-12" />
          <Caption htmlFor="fileTo" $end>To:</Caption><Field id="fileTo" defaultValue="2021-05-17" readOnly />
        </Line>
        <Group $mt={5} $h={84} $cols="minmax(0, 1fr) 57px">
          <div>
            <Line $h={27} $pl={4}><Radio name="load" label="Use Number Of Days To Load" on /></Line>
            <Line $h={26} $cols="116px 111px">
              <Caption htmlFor="days" $end>Days To Load:</Caption>
              <SpinBox>
                <Field id="days" defaultValue="365" />
                <SpinButtons>
                  <SpinButton type="button" aria-label="More days"><svg width="4" height="3"><path d="M0 3l2-3 2 3z" /></svg></SpinButton>
                  <SpinButton type="button" aria-label="Fewer days"><svg width="4" height="3"><path d="M0 0l2 3 2-3z" /></svg></SpinButton>
                </SpinButtons>
              </SpinBox>
            </Line>
            <Line $h={28} $pl={3}><Check label="Adjust Proportional With Bar Period" /></Line>
          </div>
          <DepthCell>
            <label htmlFor="depth">Market Depth:</label>
            <DepthField><Field id="depth" defaultValue="10" /></DepthField>
          </DepthCell>
        </Group>
        <Group $mt={6} $h={64}>
          <Line $h={22} $pl={4}><Radio name="load" label="Use Date Range" /></Line>
          <Line $h={26} $cols="75px 103px 37px 103px">
            <Caption htmlFor="rangeFrom" $end $dim>From:</Caption><Field id="rangeFrom" disabled />
            <Caption htmlFor="rangeTo" $end $dim>To:</Caption><Field id="rangeTo" disabled />
          </Line>
        </Group>
        <Group $mt={4} $h={99}>
          <Line $mt={8} $h={25} $cols="183px 134px">
            <Caption htmlFor="format" $end>Price Display Format:</Caption><Dropdown id="format" value="0.01" />
          </Line>
          <Line $mt={6} $h={26} $cols="183px 134px">
            <Caption htmlFor="tick" $end>Tick Size:</Caption><Field id="tick" defaultValue="0.010000" />
          </Line>
          <Line $h={31} $pl={28}><Check label="Auto-Set From Data Feed" /></Line>
        </Group>
        <Line $mt={7} $h={26} $cols="185px 125px" $gap={8}>
          <Caption htmlFor="mult" $end>Volume at Price Mult.:</Caption><Field id="mult" defaultValue="1" />
        </Line>
        <Line $h={16}><Caption htmlFor="symbol">Symbol:</Caption></Line>
        <Line $mt={5} $h={26} $cols="224px 68px" $gap={16} $pl={29}>
          <Field id="symbol" defaultValue="ATH-STK-SMART/TSE-CAD" /><Push type="button">Find</Push>
        </Line>
        <Line $mt={6} $h={24}><Caption htmlFor="quote">Trade and Current Quote Symbol:</Caption></Line>
        <Line $h={26} $cols="224px 68px" $gap={16} $pl={29}>
          <Field id="quote" /><Push type="button">Find</Push>
        </Line>
        <Line $h={34} $pl={29}><Check label="Use As Trade Only Symbol" /></Line>
      </Column>

      <Column>
        <Line $h={26}><Caption htmlFor="dataType">Chart Data Type:</Caption></Line>
        <Line $h={25}><Dropdown id="dataType" value="Intraday Chart" /></Line>
        <FieldSet $mt={6} $h={139}>
          <Legend>Intraday Chart Bar Period:</Legend>
          <Line $h={24} $pl={14}><Caption htmlFor="periodType">Bar Period Type:</Caption></Line>
          <Line $h={25} $pl={9} $cols="294px"><Dropdown id="periodType" value="Range Per Bar - Standard (in ticks)" /></Line>
          <Line $mt={9} $h={25} $cols="94px 208px">
            <Caption htmlFor="setting" $end>Setting:</Caption><Field id="setting" defaultValue="2" />
          </Line>
          <Line $mt={8} $h={25} $pl={4} $gap={11} $cols="144px 144px">
            <Dropdown label="Gap fill" value="Gap Fill - None" /><Dropdown label="New trend bar" value="New Trend Bar When Range Met" off />
          </Line>
        </FieldSet>
        <FieldSet $mt={1} $h={232}>
          <Legend>Session Times (HH:MM:SS):</Legend>
          <Line $mt={8} $h={25} $pl={17} $cols="141px 133px">
            <Caption htmlFor="start">Start Time:</Caption><Field id="start" defaultValue="07:30:00" />
          </Line>
          <Line $mt={4} $h={25} $pl={17} $cols="141px 133px">
            <Caption htmlFor="end">End Time:</Caption><Field id="end" defaultValue="14:30:00" />
          </Line>
          <Line $h={28} $pl={17}><Check label="Use Evening Session" /></Line>
          <Line $h={26} $pl={17} $cols="141px 133px">
            <Caption htmlFor="evStart">Evening Start Time:</Caption><Field id="evStart" defaultValue="14:30:01" disabled />
          </Line>
          <Line $mt={5} $h={26} $pl={17} $cols="141px 133px">
            <Caption htmlFor="evEnd">Evening End Time:</Caption><Field id="evEnd" defaultValue="07:29:59" disabled />
          </Line>
          <Line $h={32} $pl={17}><Check label="New Bar At Session Start" /></Line>
          <Line $h={25} $pl={17} $cols="273px"><Dropdown label="Weekend data" value="Load All Weekend Data" /></Line>
        </FieldSet>
        <Line $mt={3} $h={24} $pl={18}><Check label="Automatically Rollover Futures Symbol" on /></Line>
        <Line $h={24} $pl={18}><Check label="Save Days to Load, Intraday Bar Period, Graph Draw Type as Default" /></Line>
      </Column>

      <Column $pl={3}>
        <FieldSet $mt={8} $h={148}>
          <Legend>Historical Chart Bar Period:</Legend>
          <PeriodGrid>
            <div>
              {['Days:', 'Weekly', 'Monthly', 'Quarterly', 'Yearly'].map((p, i) => (
                <Line $h={23} key={p}><Radio name="period" label={p} on={i === 0} off /></Line>
              ))}
            </div>
            <PeriodField><Field aria-label="Days per bar" defaultValue="1" disabled /></PeriodField>
          </PeriodGrid>
        </FieldSet>
        <Line $mt={11} $h={23}><span id="drawType">Graph Draw Type:</span></Line>
        <ListBox>
          <ListItems role="listbox" aria-labelledby="drawType">
            {['OHLC Bars', 'Candlestick Bars', 'Candlestick Body Only', 'Candlestick Bars Hollow', 'Line on Close', 'Mountain'].map(t => (
              <ListItem key={t} role="option" aria-selected={t === 'Candlestick Bars'} $on={t === 'Candlestick Bars'}>{t}</ListItem>
            ))}
          </ListItems>
          <ListScroll>
            <Chevron d="M2 8l4-4 4 4" /><ListThumb /><span /><Chevron d="M2 4l4 4 4-4" />
          </ListScroll>
        </ListBox>
        <Push type="button" $w={103} $h={32} $mt={9}>Scale</Push>
        <Push type="button" $w={234} $h={32} $mt={13}>Apply Global Symbol Settings</Push>
        <Push type="button" $w={234} $h={32} $mt={6}>Edit Global Symbol Settings</Push>
      </Column>
    </Panel>
    <DialogButtons>
      <Push type="submit" $w={110} $main>OK</Push>
      <Push type="button" $w={110}>Cancel</Push>
      <Push type="button" $w={110}>Apply</Push>
      <Push type="button" $w={110}>Help</Push>
    </DialogButtons>
  </Dialog>
);

const ServiceSettings = ({ menu, rows, top, titleH, pad, rest, end }: {
  menu: string[]; rows: Row[]; top: number; titleH: number; pad: string; rest: number; end: number;
}) => (
  <ServiceWindow $mt={top}>
    <TitleBar $h={titleH} $end={end}>
      <AppGlyph />
      <TitleText>Data/Trade Service Settings Window</TitleText>
      <Controls>
        <GlyphButton aria-label="Minimize"><MinimizeGlyph /></GlyphButton>
        <GlyphButton aria-label="Maximize"><MaximizeGlyph /></GlyphButton>
        <GlyphButton aria-label="Close"><CloseGlyph /></GlyphButton>
      </Controls>
    </TitleBar>
    <MenuBar $h={22}>{menu.map(m => <MenuItem key={m} href="#">{m}</MenuItem>)}</MenuBar>
    <ServiceBody $pad={pad} $rest={rest}>
      <TableWrap>
        <SettingsTable>
          <thead><tr><HeadCell>Setting Name</HeadCell><HeadCell>Value</HeadCell></tr></thead>
          <tbody>
            {rows.map((r, i) => {
              if (r.kind === 'section' || r.kind === 'blank') {
                return <tr key={i}><Cell colSpan={2} $kind={r.kind === 'section' ? 'section' : undefined}>{r.name ?? '\u00a0'}</Cell></tr>;
              }
              if (r.kind === 'active') {
                return (
                  <tr key={i}>
                    <Cell $kind="active" $split>{r.name}</Cell>
                    <Cell $kind="active">
                      <Picker>
                        <PickerSelect>
                          <Dropdown bold label="Current selected service" value={'Interactive Brokers\u00a0\u00a0\u00a0\u00a0[trading]'} />
                        </PickerSelect>
                        <PickerButton>A</PickerButton>
                        <PickerButton>C</PickerButton>
                      </Picker>
                    </Cell>
                  </tr>
                );
              }
              return <tr key={i}><Cell $split>{r.name}</Cell><Cell $yes={r.value === 'Yes'}>{r.value}</Cell></tr>;
            })}
          </tbody>
        </SettingsTable>
      </TableWrap>
      <ActionRow>
        {['OK', 'Cancel', 'Revert All', 'Apply All'].map(t => <ActionButton key={t}>{t}</ActionButton>)}
      </ActionRow>
    </ServiceBody>
  </ServiceWindow>
);

export default function App() {
  return (
    <>
      <Global />
      <Page>
        <AppWindow>
          <TitleBar $h={30} $end={10} $muted>
            <Globe size={19} />
            <TitleText>{'Sierra Chart 2253 ATH  Interactive Brokers 2021-05-17  13:03:21 Mon [Sim]  DF:18974  ST:6, 6 - [Trading Chart ATH-STK-SMART/TSE-CAD [C-D]  0.02 Range  #1 | AT]'}</TitleText>
            <Controls>
              <GlyphButton aria-label="Minimize"><MinimizeGlyph /></GlyphButton>
              <GlyphButton aria-label="Restore"><RestoreGlyph /></GlyphButton>
              <GlyphButton aria-label="Close"><CloseGlyph /></GlyphButton>
            </Controls>
          </TitleBar>
          <MenuBar $h={22} $muted>
            <AppGlyph />
            {menuItems.map(m => <MenuItem key={m} href="#">{m}</MenuItem>)}
            <MdiControls>
              <MdiButton aria-label="Minimize chart"><svg width="8" height="10"><path d="M1 9h6" stroke="currentColor" strokeWidth="2" /></svg></MdiButton>
              <MdiButton aria-label="Restore chart"><svg width="9" height="10"><path d="M1 4h5v5H1zM3 3V1h5v5H7" fill="none" stroke="currentColor" strokeWidth="1.500" /></svg></MdiButton>
              <MdiButton aria-label="Close chart"><svg width="8" height="8"><path d="M1 1l6 6M7 1L1 7" stroke="currentColor" strokeWidth="2" /></svg></MdiButton>
            </MdiControls>
          </MenuBar>
          <ToolBar>
            <Status>{'DF:18980  ST:6, 6  BR:342.8K  DL:0'}</Status>
            {toolGroups.map((g, i) => (
              <ToolGroup key={i}>
                {g.map((b, j) => <Tool key={j} $w={b.w} $on={b.on} disabled={b.off} aria-label={b.name}>{b.t}</Tool>)}
              </ToolGroup>
            ))}
          </ToolBar>
          <TabStrip $h={28}>
            <SheetTab $w={57}>SU Test</SheetTab>
            <SheetTab $w={38} $on>ATH</SheetTab>
            <SheetTab $w={44}>USOil</SheetTab>
          </TabStrip>
          <Chart>
            <Plot>
              <Readout>
                <span>{'ATH-STK-SMART/TSE-CAD [C-D]  0.02 Range  #1'}</span>
                <Chip $bg="#000">C: 0.74</Chip>
                <span>T: 424</span>
                <Chip $bg="#00c400">Chg: 0.01</Chip>
                <Chip $bg="#00c400">DChg: 0.03</Chip>
                {['2021-05-17 12:25:53', 'H: 0.74', 'L: 0.72', 'O: 0.74', 'V: 1088340', 'B: 0.73', 'A: 0.74', '110.5Kx496.5K', 'RR:0.00', 'BV: 500', 'AV: 11000', 'DV: 823486', 'DD: 00:00:16', 'Curr'].map(t => (
                  <span key={t}>{t}</span>
                ))}
              </Readout>
              <Plotting />
            </Plot>
            <PriceAxis>{prices.map(p => <Price key={p} $on={p === '0.74'}>{p}</Price>)}</PriceAxis>
            <DateAxis>
              <DateCell $w={75} $first>1-5-12</DateCell>
              <DateCell $w={54}>5-13</DateCell>
              <DateCell $w={54}>5-14</DateCell>
              <DateGap $w={36} />
              {dates.map(d => <DateCell key={d} $w={54}>{d}</DateCell>)}
              <DateGap $w={918} />
              {['8-26', '8-30', '9-3'].map(d => <DateCell key={d} $w={54}>{d}</DateCell>)}
            </DateAxis>
            <LastMark>17 L</LastMark>
          </Chart>
          <ScrollTrack>
            <Chevron d="M8 1L4 6l4 5" color="#a8a8a8" />
            <Chevron d="M4 1l4 5-4 5" color="#a8a8a8" />
          </ScrollTrack>
          <TabStrip $h={29}>
            {sheetTabs.map(([t, w]) => <SheetTab key={t} $w={w} $on={t === 'Trading Chart'}>{t}</SheetTab>)}
          </TabStrip>
          <TaskBar>
            <TaskSlot $w={61} aria-label="Start">{taskIcons.start}</TaskSlot>
            <Search>
              <svg width="22" height="22" viewBox="0 0 22 22" fill="none" stroke="#222" strokeWidth="1.600"><circle cx="14" cy="8" r="6.500" /><path d="M9 13l-8 8" /></svg>
              <SearchInput placeholder="Type here to search" aria-label="Search" />
            </Search>
            {taskButtons.map(b => <TaskSlot key={b.icon} $w={b.w} $live={b.live} $on={b.on} aria-label={b.icon}>{taskIcons[b.icon]}</TaskSlot>)}
            <Tray>
              {['help', 'up', 'wifi', 'cam', 'battery'].map(t => <TaskSlot key={t} $w={40} aria-label={t}>{taskIcons[t]}</TaskSlot>)}
              <TrayText $w={44}>ENG</TrayText>
              <TrayText $w={92}>1:03 PM<br />2021-05-17</TrayText>
              <TaskSlot $w={50} aria-label="Notifications">{taskIcons.note}</TaskSlot>
              <ShowDesktop />
            </Tray>
          </TaskBar>

          <Notice>Symbol settings not found for current service</Notice>
          <SettingsDialog />
          <Annotations aria-hidden="true">
            <path d={leftArrow(1006, 558, 1057, 1115, 14, 8)} {...ARROW} />
            <path d={leftArrow(1261, 505, 1321, 1390, 18, 9)} {...ARROW} />
            <path d={leftArrow(1444, 578, 1508, 1584, 11, 7)} {...ARROW} />
            <path d={leftArrow(1104, 850, 1153, 1214, 11, 6)} {...ARROW} />
            <path d="M35 917L20 874H28V820H42V874H50Z" {...ARROW} />
          </Annotations>
        </AppWindow>

        <Frame $edge="#dcdcdc" $cols="15px minmax(0, 1fr)">
          <Sliver $side="left">
            -1
            <SliverMark $mt={180} $h={2} $color="#f01fe0" />
            <SliverFoot>un</SliverFoot>
          </Sliver>
          <ServiceSettings
            menu={['[*Main Settings]', '[Common Settings]', 'View']}
            rows={mainRows} top={1} titleH={38} pad="2px 2px 3px 11px" rest={8} end={0}
          />
        </Frame>

        <Frame $edge="#6b6b6b" $cols="8px minmax(0, 1fr) 7px">
          <Sliver $side="left">
            1
            <SliverMark $mt={184} $h={1} $color="#f01fe0" />
            <SliverFoot>n</SliverFoot>
          </Sliver>
          <ServiceSettings
            menu={['[Main Settings]', '[*Common Settings]', 'View']}
            rows={commonRows} top={5} titleH={38} pad="2px 11px 4px 11px" rest={333} end={9}
          />
          <Sliver $side="right">
            3
            <SliverFoot>I</SliverFoot>
          </Sliver>
        </Frame>
      </Page>
    </>
  );
}
